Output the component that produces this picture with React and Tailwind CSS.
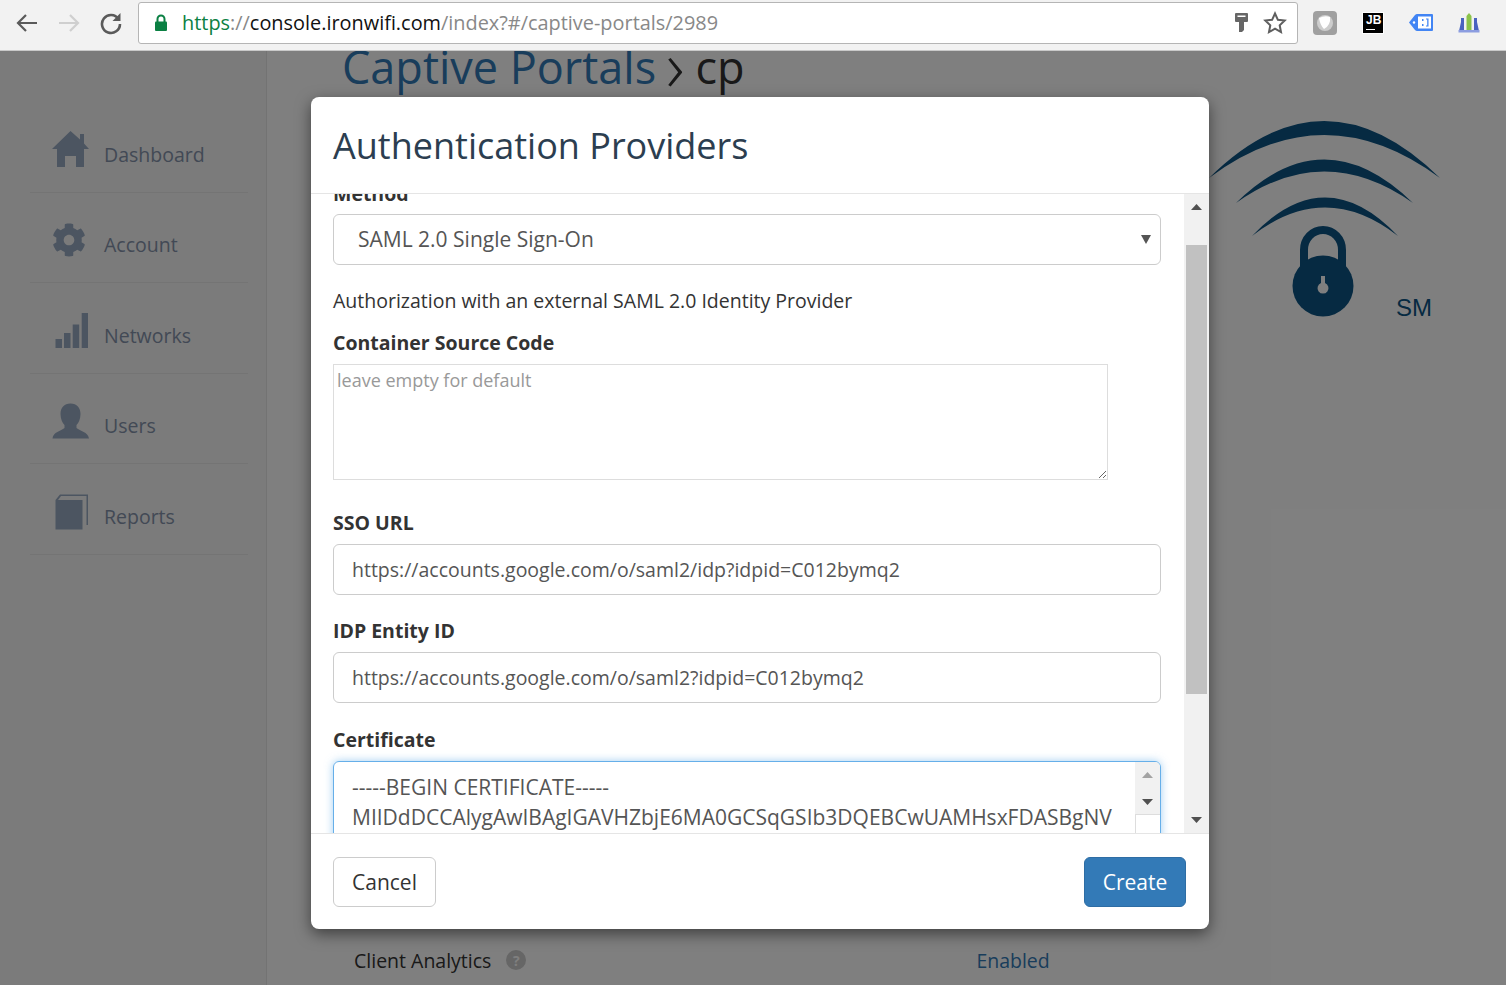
import React from 'react';
import { FaCog } from 'react-icons/fa';

const font = { fontFamily: '"Open Sans", "Noto Sans", sans-serif' };

function HomeIcon() {
    return (
        <svg width="38" height="37" viewBox="0 0 38 37" className="text-[#98aac2]">
            <path fill="currentColor" d="M18.5 0 L28 8.5 V3 H32 V12.5 L37 18 H32 V36 H24 V25 H13 V36 H5 V18 H0 Z" />
        </svg>
    );
}

function SignalIcon() {
    return (
        <svg width="34" height="36" viewBox="0 0 34 36" className="text-[#98aac2] ml-[2px]">
            <rect x="1.5" y="26" width="6.5" height="9" fill="currentColor" />
            <rect x="10" y="20" width="6.5" height="15" fill="currentColor" />
            <rect x="18.7" y="11.5" width="6.5" height="23.5" fill="currentColor" />
            <rect x="27.7" y="0" width="6.3" height="35" fill="currentColor" />
        </svg>
    );
}

function UserIcon() {
    return (
        <svg width="38" height="36" viewBox="0 0 38 36" className="text-[#98aac2]">
            <path fill="currentColor" d="M18.5 0.5 C25 0.5 28.5 5 28.5 11 C28.5 16 26.5 20 24.5 22 V25 C28 28 36 29 37 35.5 H0.5 C1 29 9 28 12.5 25 V22 C10.5 20 8.5 16 8.5 11 C8.5 5 12 0.5 18.5 0.5 Z" />
        </svg>
    );
}

function BookIcon() {
    return (
        <svg width="34" height="36" viewBox="0 0 34 36" className="text-[#98aac2] ml-[3px]">
            <path fill="currentColor" d="M0.5 6 L5 0.5 H33 V31 H31.500 V2 H6 L3 6 H27.500 V35.500 H0.5 Z" />
        </svg>
    );
}

function NavItem({ icon, label }) {
    return (
        <div className="h-[90.5px] border-b border-[#e9e9e9] flex items-center relative">
            <div className="w-[74px] flex pl-[22px] mt-[6px]">{icon}</div>
            <span className="text-[19.5px] text-[#8593ab] mt-[15px]">{label}</span>
        </div>
    );
}

function BrowserBar() {
    return (
        <div className="h-[51px] bg-[#f2f2f2] border-b border-[#c9c9c9] flex items-center shrink-0 pb-[5px]">
            <svg width="24" height="24" viewBox="0 0 24 24" className="ml-[15px] text-[#5a5a5a]" fill="none" stroke="currentColor" strokeWidth="2.200">
                <path d="M22 12H3M11 4l-8 8 8 8" />
            </svg>
            <svg width="24" height="24" viewBox="0 0 24 24" className="ml-[18px] text-[#cfcfcf]" fill="none" stroke="currentColor" strokeWidth="2.200">
                <path d="M2 12h19M13 4l8 8-8 8" />
            </svg>
            <svg width="24" height="24" viewBox="0 0 24 24" className="ml-[18px] text-[#5a5a5a]" fill="none" stroke="currentColor" strokeWidth="2.600">
                <path d="M19.5 8 A9 9 0 1 0 21 13" />
                <path d="M21.500 2v8h-8z" fill="currentColor" stroke="none" />
            </svg>
            <div className="ml-[15px] w-[1160px] h-[42px] bg-white border border-[#b5b5b5] rounded-[3px] flex items-center">
                <svg width="14" height="18" viewBox="0 0 14 18" className="ml-[15px]">
                    <path d="M3.500 8V5a3.500 3.500 0 0 1 7 0v3" fill="none" stroke="#0b8043" strokeWidth="2" />
                    <rect x="1" y="7.500" width="12" height="9.500" rx="1" fill="#0b8043" />
                </svg>
                <div className="ml-[14px] text-[19.9px] leading-none whitespace-nowrap">
                    <span className="text-[#0b8043]">https</span>
                    <span className="text-[#888]">://</span>
                    <span className="text-[#111]">console.ironwifi.com</span>
                    <span className="text-[#888]">/index?#/captive-portals/2989</span>
                </div>
                <svg width="13" height="19" viewBox="0 0 13 19" className="ml-auto mr-[15px] text-[#666]">
                    <path fill="currentColor" d="M1 0h11a1 1 0 0 1 1 1v7a1 1 0 0 1-1 1H9v8l-2 2H4V9H1a1 1 0 0 1-1-1V1a1 1 0 0 1 1-1z" />
                    <rect x="2.500" y="2.500" width="8" height="1.500" fill="#fff" />
                </svg>
                <svg width="24" height="24" viewBox="0 0 24 24" className="mr-[10px] text-[#5f5f5f]" fill="none" stroke="currentColor" strokeWidth="2">
                    <path d="M12 2.500l2.900 6.300 6.800.8-5 4.700 1.300 6.800L12 17.700 6 21.100l1.300-6.800-5-4.700 6.800-.8z" />
                </svg>
            </div>
            <div className="ml-[15px] w-[24px] h-[24px] rounded-[4px] bg-[#a0a0a0] flex items-center justify-center">
                <svg width="18" height="18" viewBox="0 0 18 18">
                    <circle cx="9" cy="9" r="8" fill="#cdcdcd" />
                    <path d="M3 4 Q9 1 14 3 Q15 11 8 15 Q4 11 3 4Z" fill="#fff" />
                </svg>
            </div>
            <div className="ml-[25px] w-[22px] h-[22px] bg-black border border-white flex flex-col px-[3px] pt-[1px]">
                <span className="text-white font-bold text-[12px] leading-[12px]" style={{ fontFamily: '"Liberation Sans", sans-serif' }}>JB</span>
                <span className="w-[9px] h-[1px] bg-white mt-[3px]" />
            </div>
            <svg width="24" height="19" viewBox="0 0 24 19" className="ml-[25px]">
                <path d="M0 9.500 L6 2 Q7 1 8 1 H23 Q24 1 24 2 V17 Q24 18 23 18 H8 Q7 18 6 17Z" fill="#4285f4" />
                <rect x="9" y="3.500" width="13" height="12" fill="#fff" />
                <circle cx="5" cy="9.500" r="1.200" fill="#fff" />
                <path d="M13 6h1.500v2H13zM13 11h1.500v2H13zM17 5.500h2.500v8H17v-1h1.200v-6H17z" fill="#4285f4" />
            </svg>
            <svg width="22" height="20" viewBox="0 0 22 20" className="ml-[25px]">
                <path d="M1 18 L3 9 V5h3v13z" fill="#4a63c0" />
                <path d="M21 18 L19 9 V5h-3v13z" fill="#4a63c0" />
                <path d="M8.500 18V3L11 0l2.500 3v15z" fill="#8bc34a" />
                <rect x="0.500" y="17" width="21" height="2.500" fill="#8c9de0" />
            </svg>
        </div>
    );
}

function Logo() {
    return (
        <svg width="250" height="220" viewBox="1200 110 250 220" className="absolute left-[1200px] top-[59px] text-[#0c5484]">
            <path fill="currentColor" d="M1209 178 Q1324 64 1440 178 Q1324 92 1209 178Z" />
            <path fill="currentColor" d="M1236 203 Q1324 116 1413 203 Q1324 140 1236 203Z" />
            <path fill="currentColor" d="M1252 236 Q1325 159 1398 236 Q1325 179 1252 236Z" />
            <path fill="none" stroke="currentColor" strokeWidth="8" d="M1304 270 V250 A19 20 0 0 1 1342 250 V270" />
            <circle cx="1323" cy="286" r="30.500" fill="currentColor" />
            <path fill="#fff" d="M1321 276 h4 v7 a5.500 5.500 0 1 1 -4 0z" />
            <text x="1396" y="316" fontSize="24" fill="currentColor" fontFamily="Liberation Sans, sans-serif">SM</text>
        </svg>
    );
}

function Label({ children, className }) {
    return <div className={`text-[19.5px] font-bold text-[#333] leading-[28px] ${className}`}>{children}</div>;
}

function TextField({ value }) {
    return (
        <input
            readOnly
            value={value}
            className="block w-full h-[51px] border border-[#ccc] rounded-[6px] px-[18px] text-[19.5px] text-[#555] bg-white outline-none"
            style={font}
        />
    );
}

function AuthModal() {
    return (
        <div className="absolute left-[311px] top-[46px] w-[898px] h-[832px] bg-white rounded-[8px] shadow-[0_5px_15px_rgba(0,0,0,0.5)] flex flex-col overflow-hidden">
            <div className="h-[97px] shrink-0 border-b border-[#e5e5e5] pl-[22px] pt-[24px]">
                <div className="text-[36px] leading-[50px] text-[#2c3e50]">Authentication Providers</div>
            </div>
            <div className="flex-1 flex overflow-hidden min-h-0">
                <div className="flex-1 pl-[22px] pr-[23px] overflow-hidden">
                    <Label className="-mt-[14px] mb-[6px]">Method</Label>
                    <div className="relative h-[51px] border border-[#ccc] rounded-[6px] flex items-center pl-[24px]">
                        <span className="text-[21px] text-[#555]">SAML 2.0 Single Sign-On</span>
                        <svg width="10" height="9" viewBox="0 0 10 9" className="absolute right-[9px] top-[20px]">
                            <path d="M0 0h10L5 9z" fill="#555" />
                        </svg>
                    </div>
                    <div className="text-[19.5px] text-[#333] leading-[28px] mt-[22px]">Authorization with an external SAML 2.0 Identity Provider</div>
                    <Label className="mt-[14px] mb-[7px]">Container Source Code</Label>
                    <textarea
                        readOnly
                        placeholder="leave empty for default"
                        className="block w-[775px] h-[116px] border border-[#ddd] px-[3px] py-[2px] text-[18px] leading-[27px] outline-none placeholder:text-[#999]"
                        style={font}
                    />
                    <Label className="mt-[29px] mb-[7px]">SSO URL</Label>
                    <TextField value="https://accounts.google.com/o/saml2/idp?idpid=C012bymq2" />
                    <Label className="mt-[22px] mb-[7px]">IDP Entity ID</Label>
                    <TextField value="https://accounts.google.com/o/saml2?idpid=C012bymq2" />
                    <Label className="mt-[23px] mb-[7px]">Certificate</Label>
                    <div className="relative h-[120px] border border-[#66afe9] rounded-[6px] shadow-[0_0_8px_rgba(102,175,233,0.6)] px-[18px] py-[10px] text-[21px] leading-[30px] text-[#555] whitespace-nowrap overflow-hidden">
                        <div>-----BEGIN CERTIFICATE-----</div>
                        <div>MIIDdDCCAlygAwIBAgIGAVHZbjE6MA0GCSqGSIb3DQEBCwUAMHsxFDASBgNV</div>
                        <div className="absolute right-0 top-0 w-[25px] bottom-0 bg-[#f1f1f1] flex flex-col items-center">
                            <svg width="11" height="6" viewBox="0 0 11 6" className="mt-[10px]"><path d="M0 6h11L5.500 0z" fill="#a3a3a3" /></svg>
                            <svg width="11" height="6" viewBox="0 0 11 6" className="mt-[21px]"><path d="M0 0h11L5.500 6z" fill="#505050" /></svg>
                            <div className="w-full h-[40px] mt-[9px] bg-white border-t border-l border-[#ddd]" />
                        </div>
                    </div>
                </div>
                <div className="w-[25px] shrink-0 bg-[#f1f1f1] flex flex-col items-center">
                    <svg width="11" height="6" viewBox="0 0 11 6" className="mt-[10px]"><path d="M0 6h11L5.500 0z" fill="#505050" /></svg>
                    <div className="w-[21px] h-[449px] bg-[#c1c1c1] mt-[35px]" />
                    <svg width="11" height="6" viewBox="0 0 11 6" className="mt-[123px]"><path d="M0 0h11L5.500 6z" fill="#505050" /></svg>
                </div>
            </div>
            <div className="h-[96px] shrink-0 border-t border-[#e5e5e5] flex items-center justify-between pl-[22px] pr-[23px]">
                <button className="h-[50px] w-[103px] border border-[#ccc] rounded-[6px] text-[21px] text-[#333] bg-white pt-[2px]">Cancel</button>
                <button className="h-[50px] w-[102px] border border-[#2e6da4] rounded-[6px] text-[21px] text-white bg-[#337ab7] pt-[2px]">Create</button>
            </div>
        </div>
    );
}

export default function App() {
    return (
        <div className="w-[1506px] h-[985px] flex flex-col overflow-hidden bg-white" style={font}>
            <BrowserBar />
            <div className="flex-1 relative flex overflow-hidden min-h-0">
                <div className="w-[267px] shrink-0 border-r border-[#e6e6e6] bg-[#f6f6f6] pl-[30px] pr-[18px] pt-[51px]">
                    <NavItem icon={<HomeIcon />} label="Dashboard" />
                    <NavItem icon={<FaCog size={34} className="text-[#98aac2]" />} label="Account" />
                    <NavItem icon={<SignalIcon />} label="Networks" />
                    <NavItem icon={<UserIcon />} label="Users" />
                    <NavItem icon={<BookIcon />} label="Reports" />
                </div>
                <div className="flex-1 flex flex-col pl-[75px]">
                    <div className="flex items-center text-[45px] leading-[32px] whitespace-nowrap">
                        <span className="text-[#337ab7]">Captive Portals</span>
                        <span className="text-[#333] ml-[10px] text-[72px] leading-[32px] -mt-[6px] font-light">›</span>
                        <span className="text-[#333] ml-[11px]">cp</span>
                    </div>
                    <div className="mt-auto mb-[10px] flex items-center text-[19.5px] pl-[12px]">
                        <span className="text-[#333]">Client Analytics</span>
                        <span className="ml-[15px] w-[20px] h-[20px] rounded-full bg-[#ccc] text-white text-[14px] font-bold flex items-center justify-center">?</span>
                        <span className="ml-[450px] text-[#337ab7]">Enabled</span>
                    </div>
                </div>
                <Logo />
                <div className="absolute inset-0 bg-black/50" />
                <AuthModal />
            </div>
        </div>
    );
}
